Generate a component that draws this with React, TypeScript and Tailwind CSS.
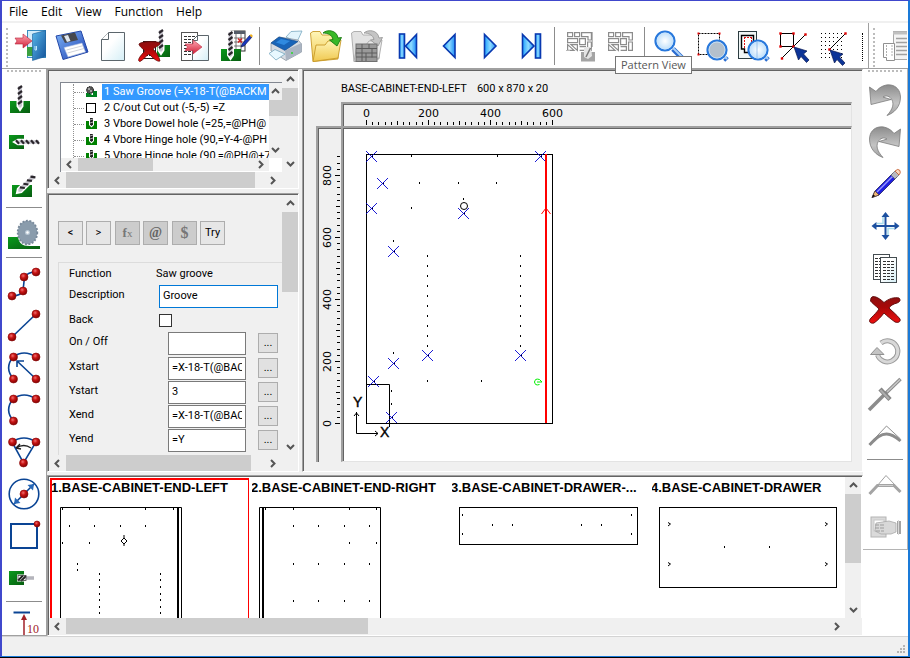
import React from "react";

type Kids = { children?: React.ReactNode };
type Pt = [number, number];

const SANS = "font-['Roboto',Arial,sans-serif]";
const ARIAL = "font-['Liberation_Sans',Arial,sans-serif]";
const UI = "font-['Open_Sans','Noto_Sans',sans-serif]";

/* ---------- shared drawing pieces ---------- */

function Defs() {
  return (
    <svg className="absolute size-0" aria-hidden="true">
      <defs>
        <linearGradient id="gBlue" x1="0" y1="0" x2="1" y2="1">
          <stop offset="0" stopColor="#7db4f8" />
          <stop offset="1" stopColor="#1c3fb0" />
        </linearGradient>
        <linearGradient id="gNav" x1="0" y1="0" x2="1" y2="0">
          <stop offset="0" stopColor="#1fa0ff" />
          <stop offset="0.5" stopColor="#8fdcff" />
          <stop offset="1" stopColor="#1c8cf8" />
        </linearGradient>
        <linearGradient id="gDoor" x1="0" y1="0" x2="1" y2="1">
          <stop offset="0" stopColor="#58b8ea" />
          <stop offset="1" stopColor="#14529a" />
        </linearGradient>
        <linearGradient id="gPage" x1="0" y1="0" x2="1" y2="1">
          <stop offset="0.4" stopColor="#ffffff" />
          <stop offset="1" stopColor="#d4eef6" />
        </linearGradient>
        <linearGradient id="gPink" x1="0" y1="0" x2="0" y2="1">
          <stop offset="0" stopColor="#ffa8b4" />
          <stop offset="1" stopColor="#d02038" />
        </linearGradient>
        <linearGradient id="gFolder" x1="0" y1="0" x2="0" y2="1">
          <stop offset="0" stopColor="#fff6b8" />
          <stop offset="1" stopColor="#f0c850" />
        </linearGradient>
        <linearGradient id="gGrey" x1="0" y1="0" x2="0" y2="1">
          <stop offset="0" stopColor="#8c8c8c" />
          <stop offset="0.6" stopColor="#c4c4c4" />
          <stop offset="1" stopColor="#a0a0a0" />
        </linearGradient>
        <linearGradient id="gRed" x1="0" y1="0" x2="0" y2="1">
          <stop offset="0" stopColor="#8c1010" />
          <stop offset="0.4" stopColor="#a80808" />
          <stop offset="1" stopColor="#f01010" />
        </linearGradient>
        <linearGradient id="gGreen" x1="0" y1="0" x2="1" y2="1">
          <stop offset="0" stopColor="#0a9a1c" />
          <stop offset="1" stopColor="#075c10" />
        </linearGradient>
        <radialGradient id="gLens">
          <stop offset="0" stopColor="#ffffff" />
          <stop offset="1" stopColor="#b8dcfa" />
        </radialGradient>
        <radialGradient id="gNode" cx="0.4" cy="0.35" r="0.7">
          <stop offset="0" stopColor="#f07070" />
          <stop offset="0.4" stopColor="#c81414" />
          <stop offset="1" stopColor="#780000" />
        </radialGradient>
      </defs>
    </svg>
  );
}

function Drill({ a, b, w = 4 }: { a: Pt; b: Pt; w?: number }) {
  const len = Math.hypot(b[0] - a[0], b[1] - a[1]);
  const angle = (Math.atan2(b[1] - a[1], b[0] - a[0]) * 180) / Math.PI;
  const h = w / 2;
  const turns = Array.from({ length: Math.floor((len - 2) / 5) + 1 }, (_, i) => i * 5);
  return (
    <g transform={`translate(${a[0]} ${a[1]}) rotate(${angle})`}>
      <path d={`M0 ${-h} H${len - 1} L${len + 2} 0 L${len - 1} ${h} H0 Z`} fill="#c9c7cf" stroke="#fff" strokeWidth="3" />
      <path d={`M0 ${-h} H${len - 1} L${len + 1} 0 L${len - 1} ${h} H0 Z`} fill="#c9c7cf" />
      {turns.map((t) => (
        <path key={t} d={`M${t} ${-h} L${t + 3} ${h}`} stroke="#2a262c" strokeWidth="2.200" />
      ))}
    </g>
  );
}

const Node = ({ x, y, r = 4 }: { x: number; y: number; r?: number }) => (
  <circle cx={x} cy={y} r={r} fill="url(#gNode)" stroke="#8a0808" strokeWidth="0.6" />
);

function Lens({ x, y, grey = false, end }: { x: number; y: number; grey?: boolean; end: number }) {
  return (
    <g>
      <line x1={x + 8} y1={y + 8} x2={x + end} y2={y + end} stroke="#2a6cd0" strokeWidth="5" />
      <line x1={x + 8} y1={y + 7} x2={x + end} y2={y + end - 1} stroke="#a8d0f8" strokeWidth="2" />
      <circle cx={x} cy={y} r="9.5" fill={grey ? "#b4c0cc" : "url(#gLens)"} stroke="#2878dc" strokeWidth="2.2" />
      <circle cx={x} cy={y} r="8" fill="none" stroke="#c8e4ff" strokeWidth="0.8" />
    </g>
  );
}

function Cursor({ x, y }: { x: number; y: number }) {
  return (
    <path
      transform={`translate(${x} ${y})`}
      d="M0 0 L13 4 L9.5 7 L15 13 L12.5 15.5 L7 9.5 L4.5 13 Z"
      fill="#0c3498"
      stroke="#081850"
      strokeWidth="0.7"
    />
  );
}

const FolderShape = ({ grey = false }: { grey?: boolean }) => (
  <g stroke={grey ? "#a8a8a8" : "#c89a28"} strokeWidth="0.9" strokeLinejoin="round">
    <path d="M5.5 6 L8 4.5 L15 4.5 L17 8 L31 8 L33 13 L33 32 L8 34.5 Z" fill={grey ? "#e2e2e2" : "url(#gFolder)"} />
    <path d="M8 34.5 L11 18 L20 18 L23 14 L36 13 L33 31 Z" fill={grey ? "#ececec" : "url(#gFolder)"} />
    <path
      d="M18 6 C22 2 32 3 33 11 L36.5 10.5 L32 19 L24.5 13 L28 12.5 C27 8 23 6 18 6 Z"
      fill={grey ? "#c4c4c4" : "#38b828"}
      stroke={grey ? "#989898" : "#187810"}
    />
  </g>
);

const PatternPieces = () => (
  <g fill="none" stroke="#8c8c8c" strokeWidth="1.2">
    <rect x="8.6" y="5.6" width="5" height="4" />
    <rect x="15.6" y="5.6" width="5" height="4" />
    <path d="M22.6 5.6 H32.4 V13 H29 V9.6 H22.6 Z" />
    <rect x="8.6" y="11.6" width="10" height="4" />
    <path d="M8.6 17.6 V23.4 H15 Z M12 17.6 L18.4 23.4 V17.6 Z" />
    <path d="M20.6 11.6 H26.4 V17.6 H20.6 Z M20.6 19.6 H26.4 V23.4 H20.6 M28.6 15 H32.4 V23.4 H28.6 Z" />
  </g>
);

const CrossShape = () => (
  <path
    d="M8 9 C10 6 15 8 21 13.500 C26 9.500 31 8 36 9 C38 11 37 13 34 14 C30 15 27 17 26 19 C30 23 34 26 37 30 C38 33 35 34 32 33 C28 30 24 27 21 24 C18 28 14 32 11 34 C7 35 5 32 8 29 C11 26 14 23 16 20 C13 17 9 14 7.500 12 Z"
    fill="url(#gRed)"
    stroke="#5a0808"
    strokeWidth="0.9"
  />
);

/* ---------- top toolbar ---------- */

const pageLines = (x: number, y: number, w: number, n: number, step: number) =>
  Array.from({ length: n }, (_, i) => (
    <line key={i} x1={x} x2={x + w} y1={y + i * step} y2={y + i * step} stroke="#333" strokeWidth="1" strokeDasharray="3 1" />
  ));

const exitIcon = (
  <>
    <rect x="17.500" y="3.500" width="18" height="27" fill="#d4eefa" stroke="#3a8cc0" />
    <rect x="17" y="20" width="7" height="9" fill="#3aa040" />
    <path d="M22.500 7 L35.500 3.500 V29.500 L22.500 33.500 Z" fill="url(#gDoor)" stroke="#1a5c98" strokeWidth="0.6" />
    <path d="M25 19 v4 h1.500 v-4" fill="none" stroke="#bfe8ff" />
    <path d="M5 11 H13 V7 L22 14 L13 21 V17 H5 L7 14 Z" fill="url(#gPink)" stroke="#b82038" strokeWidth="0.6" />
  </>
);
const saveIcon = (
  <>
    <path d="M5 9 L30 4 L37 25 L12 32.500 Z" fill="url(#gBlue)" stroke="#2448a8" />
    <path d="M10 8.500 L24 5.500 L27 13 L14 16 Z" fill="#46484e" />
    <path d="M13 9 L17 8 L19.500 14 L16 15 Z" fill="#dfe6ee" />
    <path d="M13 20.500 L31 16 L34.500 25 L17 30 Z" fill="#fff" stroke="#9fb4dc" strokeWidth="0.6" />
    <path d="M15.500 23 L32 18.700 M16.500 26 L33 21.500" stroke="#c4c8d0" strokeWidth="0.8" />
  </>
);
const newIcon = (
  <>
    <path d="M16.500 5.500 H32.500 V33.500 H9.500 V12.500 Z" fill="url(#gPage)" stroke="#5c666c" />
    <path d="M16.500 5.500 V12.500 H9.500" fill="#fff" stroke="#5c666c" />
  </>
);
const deleteIcon = (
  <>
    <rect x="24" y="18" width="13" height="12" fill="url(#gGreen)" />
    <Drill a={[28, 3]} b={[28, 24]} />
    <rect x="10.500" y="14.500" width="12" height="17" fill="#fff" stroke="#222" />
    <path d="M13 18 h7 M13 28 h7" stroke="#222" strokeWidth="2" strokeDasharray="2 1" />
    <path
      d="M6 17 C9 14 24 14 27 16 C28 18 22 20 20 22 C23 25 26 29 27 34 C24 35 20 31 16 27 C13 29 10 33 7 34.500 C4 34 6 30 12 24 C9 21 6 19 6 17 Z"
      fill="url(#gRed)"
      stroke="#600808"
      strokeWidth="0.8"
    />
  </>
);
const copyIcon = (
  <>
    <rect x="7.500" y="5.500" width="16" height="28" fill="#fff" stroke="#555" />
    {pageLines(10, 9.5, 11, 7, 3)}
    <path d="M23.500 8.500 H34.500 V33.500 H18.500 V13.500 Z" fill="url(#gPage)" stroke="#5c666c" />
    <path d="M23.500 8.500 V13.500 H18.500" fill="none" stroke="#5c666c" />
    <path d="M11 17 H19 V13 L28 20 L19 27 V23.500 H11 L13.500 20 Z" fill="url(#gPink)" stroke="#c02840" strokeWidth="0.6" />
  </>
);
const editIcon = (
  <>
    <rect x="16" y="4" width="14" height="20" fill="#fff" stroke="#333" />
    <path d="M16 11 h14 M16 15 h14 M16 19 h14 M21 5 v19 M26 5 v19" stroke="#555" strokeWidth="0.8" />
    <rect x="16" y="4" width="14" height="3" fill="#555c68" />
    <path d="M23 11.500 l4 4 m0 -4 l-4 4" stroke="#d02020" strokeWidth="1.500" />
    <rect x="6" y="22" width="20" height="12" fill="url(#gGreen)" />
    <Drill a={[15.5, 5]} b={[15.5, 29]} />
    <path d="M26 20 L27.500 16.500 L35 8 L37 10 L29.500 18.500 Z" fill="#1838c0" stroke="#101850" strokeWidth="0.7" />
    <path d="M34.500 8.500 L36 7 L38 9 L36.500 10.500 Z" fill="#f0b020" />
  </>
);
const printIcon = (
  <>
    <path d="M22 10 L27 4.500 L38 4 L33 15 Z" fill="#e2f4fc" stroke="#78a8c0" strokeWidth="0.8" />
    <path d="M7 16 L15 10 L34 13 L37.500 17 L37.500 25 L22 33.500 L7 24 Z" fill="#d6dbe2" stroke="#7c8894" strokeWidth="0.7" />
    <path d="M7 16 L15 10 L34 14.500 L21 23.500 Z" fill="#1864b8" stroke="#0c4488" strokeWidth="0.6" />
    <path d="M12 15.500 L17 12 L26 14 L20 18 Z" fill="#2f8ae0" />
    <path d="M21 23.500 L37.500 16 V25 L22 33.500 Z" fill="#aab4c2" />
    <circle cx="28" cy="26" r="1" fill="#28d828" />
    <path d="M5 26.500 L11 22.500 L21 27 L12 33 Z" fill="#e8f8ff" stroke="#78a8c0" strokeWidth="0.8" />
  </>
);
const greyFolderIcon = (
  <>
    <FolderShape grey />
    <rect x="10" y="17" width="21" height="17.500" fill="#9a9a9a" stroke="#707070" />
    <path d="M10 21.500 h21 M10 26 h21 M10 30 h21 M16 17 v17 M23 17 v4.500 M26 21.500 v9 M20 26 v8" stroke="#5c5c5c" />
  </>
);
const NAV = { fill: "url(#gNav)", stroke: "#0838b0", strokeWidth: 1.6 };
const firstIcon = (
  <>
    <rect x="12.500" y="7" width="5" height="24" {...NAV} />
    <path d="M29.500 7.500 V30.500 L18.500 19 Z" {...NAV} />
  </>
);
const prevIcon = <path d="M27 7.500 V30.500 L15.500 19 Z" {...NAV} />;
const nextIcon = <path d="M15.500 7.500 V30.500 L27 19 Z" {...NAV} />;
const lastIcon = (
  <>
    <path d="M12.500 7.500 V30.500 L24 19 Z" {...NAV} />
    <rect x="25.500" y="7" width="5" height="24" {...NAV} />
  </>
);
const patternEditIcon = (
  <>
    <PatternPieces />
    <path d="M33.500 5 V20 M7 23.500 H11" stroke="#b8b8b8" />
    <path d="M22 25 H26 V30 H32 V25 H36 V34.500 H22 Z" fill="#a4a4a4" />
    <path d="M25 20 H32 L33 29 L29 32 L25 30 Z" fill="#e4e4e4" />
    <path d="M27 30 L31.500 21" stroke="#7a7a7a" strokeWidth="1.500" />
  </>
);
const zoomAreaIcon = (
  <>
    <rect x="8.500" y="6.500" width="21" height="21" fill="none" stroke="#000" strokeDasharray="2 1" />
    {([[8.5, 6.5], [29.5, 6.5], [8.5, 27.5]] as Pt[]).map(([x, y]) => (
      <rect key={`${x}-${y}`} x={x - 1} y={y - 1} width="2" height="2" fill="#e00000" />
    ))}
    <Lens x={27} y={23} grey end={10} />
  </>
);
const zoomPartIcon = (
  <>
    <rect x="7.500" y="4.500" width="18" height="27" fill="#f0f6f6" stroke="#2c3c40" />
    <path d="M10.500 8.500 H22.500 V25.500 H13.500 V22 H10.500 Z" fill="#fff" stroke="#000" strokeWidth="1.400" />
    <path d="M13.500 10 V22 M20.500 10 V22 M13 10.500 H21" stroke="#e01010" strokeDasharray="2 1" />
    <Lens x={27} y={23} end={10} />
    <path d="M26 14 V32" stroke="#8ab8e8" strokeWidth="0.8" />
  </>
);
const red = (pts: Pt[]) =>
  pts.map(([x, y]) => <rect key={`${x}-${y}`} x={x - 1.2} y={y - 1.2} width="2.4" height="2.4" fill="#e00000" />);
const snapObjectIcon = (
  <>
    <rect x="8.500" y="6.500" width="13" height="13" fill="#fff" stroke="#000" />
    <path d="M9.500 31.500 L33.500 7.500" stroke="#000" />
    {red([[8.5, 6.5], [21.5, 6.5], [8.5, 19.5], [21.5, 19.5], [10, 31.5], [33.5, 7.5]])}
    <Cursor x={22} y={20} />
  </>
);
const snapGridIcon = (
  <>
    {Array.from({ length: 7 }, (_, r) =>
      Array.from({ length: 6 }, (_, c) => (
        <rect key={`${r}-${c}`} x={8 + c * 4} y={6 + r * 4} width="1" height="1" fill="#000" />
      )),
    )}
    <path d="M16.500 22.500 L32.500 6.500" stroke="#000" />
    {red([[16.5, 22.5], [32.5, 6.5]])}
    <Cursor x={17} y={23} />
  </>
);

const groups: { label: string; icon: React.ReactNode }[][] = [
  [
    { label: "Exit", icon: exitIcon },
    { label: "Save", icon: saveIcon },
    { label: "New", icon: newIcon },
    { label: "Delete drilling", icon: deleteIcon },
    { label: "Copy drilling", icon: copyIcon },
    { label: "Edit drilling", icon: editIcon },
  ],
  [
    { label: "Print", icon: printIcon },
    { label: "Open", icon: <FolderShape /> },
    { label: "Open pattern", icon: greyFolderIcon },
    { label: "First", icon: firstIcon },
    { label: "Previous", icon: prevIcon },
    { label: "Next", icon: nextIcon },
    { label: "Last", icon: lastIcon },
  ],
  [
    { label: "Edit pattern", icon: patternEditIcon },
    { label: "Pattern view", icon: <PatternPieces /> },
  ],
  [
    { label: "Zoom", icon: <Lens x={16} y={14} end={18} /> },
    { label: "Zoom area", icon: zoomAreaIcon },
    { label: "Zoom part", icon: zoomPartIcon },
    { label: "Snap to object", icon: snapObjectIcon },
    { label: "Snap to grid", icon: snapGridIcon },
  ],
];

function TopToolbar() {
  return (
    <div className="relative flex h-[46px] shrink-0 border-b border-[#a0a0a0] bg-white pt-1">
      <div className="my-px ml-1 mr-0.5 w-0.5 border-l-2 border-dotted border-[#bcbcbc]" />
      <div className="flex min-w-0 flex-1 overflow-hidden">
        {groups.map((g, i) => (
          <div key={i} className="flex shrink-0">
            {i > 0 && <div className="mx-[3px] h-[38px] w-0.5 border-l border-[#8c8c8c]" />}
            {g.map((b) => (
              <button key={b.label} type="button" aria-label={b.label} className="block h-10 w-[41px]">
                <svg width="41" height="40" viewBox="0 0 41 40">
                  {b.icon}
                </svg>
              </button>
            ))}
          </div>
        ))}
        <div className="ml-2 mt-1.5 h-7 w-px border-l border-dotted border-black" />
      </div>
      <div className="-mt-1 flex w-10 shrink-0 border-l border-[#a0a0a0] pt-1">
        <div className="my-px ml-1 w-0.5 border-l-2 border-dotted border-[#bcbcbc]" />
        <button type="button" aria-label="Part list" className="ml-2 block h-10 w-6 overflow-hidden">
          <svg width="24" height="40" viewBox="0 0 24 40">
            <rect x="10.500" y="4.500" width="18" height="28" fill="#f4f4f4" stroke="#a8a8a8" />
            <path d="M10 6 h14" stroke="#c0c0c0" strokeWidth="3" />
            <path d="M13 11.500 h12 M13 15.500 h12 M13 19.500 h12 M13 23.500 h12 M13 27.500 h12" stroke="#a0a0a0" strokeWidth="1.500" />
            <path d="M0.500 16.500 H11.500 V33.500 H3.500 V30.500 H0.500 Z" fill="#fff" stroke="#909090" />
            <path d="M3.500 18 V29 M9 18 V30" stroke="#b0b0b0" strokeDasharray="2 1" />
          </svg>
        </button>
      </div>
      <div
        role="tooltip"
        className={`absolute left-[613px] top-[33px] z-10 border border-[#767676] bg-white px-[5px] text-[11px] leading-4 text-[#575757] ${UI}`}
      >
        Pattern View
      </div>
    </div>
  );
}

/* ---------- side toolbars ---------- */

const LINE = { fill: "none", stroke: "#0a4494", strokeWidth: 1.6 };

const leftIcons: { label: string; icon?: React.ReactNode }[] = [
  {
    label: "Vertical bore",
    icon: (
      <>
        <rect x="8" y="22" width="20" height="12" fill="url(#gGreen)" />
        <Drill a={[18, 7]} b={[18, 28]} />
      </>
    ),
  },
  {
    label: "Horizontal bore",
    icon: (
      <>
        <rect x="7" y="14" width="15" height="14" fill="url(#gGreen)" />
        <Drill a={[37, 21]} b={[15, 21]} w={3.6} />
      </>
    ),
  },
  {
    label: "Angled bore",
    icon: (
      <>
        <rect x="10" y="22" width="20" height="12" fill="url(#gGreen)" />
        <Drill a={[32, 13]} b={[17, 28]} />
      </>
    ),
  },
  { label: "-" },
  {
    label: "Saw",
    icon: (
      <>
        <path d="M6 24 H16 C17 30 20 33 27 33 H38 V36 H6 Z" fill="url(#gGreen)" />
        <ellipse cx="25.500" cy="19.500" rx="9.800" ry="11.800" fill="#8a9cac" />
        <ellipse cx="25.500" cy="19.500" rx="9.800" ry="11.800" fill="none" stroke="#78899a" strokeWidth="1.800" strokeDasharray="2 1.500" />
        <circle cx="25.500" cy="19.500" r="2.500" fill="#b8c8d4" />
        <circle cx="25.500" cy="19.500" r="1.200" fill="#fff" />
      </>
    ),
  },
  { label: "-" },
  {
    label: "Polyline",
    icon: (
      <>
        <path d="M10 33 Q18 33 21 28 L22.500 14 Q26 9 34 9" {...LINE} />
        <Node x={10} y={33} />
        <Node x={21} y={28} />
        <Node x={22} y={14} />
        <Node x={34} y={9} />
      </>
    ),
  },
  {
    label: "Line",
    icon: (
      <>
        <path d="M10 32 L34 9" {...LINE} />
        <Node x={10} y={32} />
        <Node x={34} y={9} />
      </>
    ),
  },
  {
    label: "Arc by centre",
    icon: (
      <>
        <path d="M11 10 Q22 2 34 10 M11 10 Q2 21 11.500 32 M34 32 L15 14 M15 20 V14 H22" {...LINE} />
        <Node x={11.5} y={10} />
        <Node x={34} y={10} />
        <Node x={11.5} y={32} />
        <Node x={34} y={32} />
      </>
    ),
  },
  {
    label: "Arc",
    icon: (
      <>
        <path d="M11 10 Q22 2 34 10 M11 10 Q2 21 11.500 32" {...LINE} />
        <Node x={11.5} y={10} />
        <Node x={34} y={10} />
        <Node x={11.5} y={32} />
      </>
    ),
  },
  {
    label: "Sector",
    icon: (
      <>
        <path d="M10 11 Q22 3 34 11 L21.500 32 Z" {...LINE} />
        <path d="M14 17 Q22 12 29 17 M14 17 L18 13 M14 17 L19 18" fill="none" stroke="#222" strokeWidth="1.300" />
        <Node x={10.5} y={11} />
        <Node x={34} y={11} />
        <Node x={21.5} y={32} />
      </>
    ),
  },
  {
    label: "Circle",
    icon: (
      <>
        <circle cx="22" cy="21" r="14.800" {...LINE} />
        <path d="M12 31 L32 11" {...LINE} />
        <path d="M12 31 L13 24.500 L18.500 30 Z M32 11 L31 17.500 L25.500 12 Z" fill="#2868b8" />
        <Node x={22} y={21} />
      </>
    ),
  },
  {
    label: "Rectangle",
    icon: (
      <>
        <rect x="9" y="9" width="26" height="24" {...LINE} strokeWidth="2" />
        <Node x={35} y={9} r={3} />
      </>
    ),
  },
  {
    label: "Pocket",
    icon: (
      <>
        <rect x="7" y="14" width="15" height="14" fill="url(#gGreen)" />
        <rect x="15" y="17.500" width="10" height="7" fill="#fff" />
        <path d="M16 23.500 l5 -5 M19 24 l5 -5" stroke="#222" strokeWidth="1.800" />
        <rect x="16" y="18.500" width="8" height="5" fill="none" stroke="#444" strokeWidth="0.8" />
        <path d="M24 21 H32" stroke="#8c8c94" strokeWidth="3" />
        <path d="M25 21 H32" stroke="#dcdce4" />
      </>
    ),
  },
  { label: "-" },
  {
    label: "Depth",
    icon: (
      <>
        <path d="M11.500 5.500 H28" stroke="#0a4494" strokeWidth="2" />
        <path d="M22 42 V9" stroke="#a02028" strokeWidth="1.500" />
        <path d="M22 7 L25 13 H19 Z" fill="#a02028" />
        <text x="25" y="26" fontSize="12" fill="#a02028" className="font-['Liberation_Serif',serif]">
          10
        </text>
      </>
    ),
  },
];

const undoPath =
  "M6.500 8 L13 12.500 C21 2 37 4 37.500 18 C37.500 28 31 34 24 36.500 C30 30 31 25 29 21 C27 17 23 16 20 18 L28 20.500 L8 25.500 Z";

const rightIcons: { label: string; icon?: React.ReactNode }[] = [
  { label: "Undo", icon: <path d={undoPath} fill="url(#gGrey)" stroke="#7c7c7c" strokeWidth="0.8" /> },
  {
    label: "Redo",
    icon: <path d={undoPath} transform="matrix(-1 0 0 1 44 0)" fill="url(#gGrey)" stroke="#7c7c7c" strokeWidth="0.8" />,
  },
  {
    label: "Edit",
    icon: (
      <>
        <path d="M9 34.500 L12 28 L30 10 L34 14 L16 32 Z" fill="#2020e0" stroke="#202060" strokeWidth="0.8" />
        <path d="M14 29 L31 12" stroke="#9898ff" strokeWidth="1.500" />
        <path d="M9 34.500 L12 28 L16 32 Z" fill="#f0b878" stroke="#50382c" strokeWidth="0.7" />
        <path d="M28 12 L32 8 L36 12 L32 16 Z" fill="#b8b8c0" stroke="#606068" strokeWidth="0.7" />
        <path d="M32 8 Q35 5 37 7.500 Q38 10 36 12 Z" fill="#f8d8c0" stroke="#c05828" strokeWidth="0.8" />
        <path d="M9 34.500 l1.500 -3 l1.500 1.500 Z" fill="#000" />
      </>
    ),
  },
  {
    label: "Move",
    icon: (
      <>
        <path d="M22.500 9 V33 M10 21 H35" stroke="#1c50a0" strokeWidth="2" />
        <path d="M22.500 7 L26.500 12 H18.500 Z M22.500 35 L26.500 30 H18.500 Z M8.500 21 L13.500 17 V25 Z M36.500 21 L31.500 17 V25 Z" fill="#1c50a0" />
        <path d="M20 12 V18.500 H14 M25 30 V23.500 H31" fill="none" stroke="#a8dcec" strokeWidth="1.500" />
      </>
    ),
  },
  {
    label: "Copy",
    icon: (
      <>
        <rect x="10.500" y="7.500" width="16" height="25" fill="#fff" stroke="#444c50" />
        {pageLines(12, 11.5, 12, 7, 3)}
        <rect x="17.500" y="10.500" width="16" height="25" fill="url(#gPage)" stroke="#444c50" />
        {pageLines(20, 14.5, 12, 7, 3)}
      </>
    ),
  },
  { label: "Delete", icon: <CrossShape /> },
  {
    label: "Rotate",
    icon: (
      <>
        <path d="M18 12 A10.500 10.500 0 1 1 14.500 24" fill="none" stroke="#9a9a9a" strokeWidth="5" />
        <path d="M18 12 A10.500 10.500 0 1 1 14.500 24" fill="none" stroke="#d8d8d8" strokeWidth="3" />
        <path d="M7.500 23.500 L14 16.500 L21 23.500 Z" fill="#c4c4c4" stroke="#909090" />
      </>
    ),
  },
  {
    label: "Split",
    icon: (
      <>
        <path d="M6 37 L22 21" stroke="#8c8c8c" strokeWidth="3.500" />
        <path d="M22 21 L37.500 6" stroke="#8c8c8c" strokeWidth="3.500" />
        <path d="M24 19 L37 6.500" stroke="#c8c8c8" strokeWidth="1.500" />
        <path d="M17 16 L27 26.500" stroke="#858585" strokeWidth="4.500" />
        <path d="M17.500 17 L26 26" stroke="#adadad" strokeWidth="2" />
      </>
    ),
  },
  {
    label: "Fillet",
    icon: (
      <>
        <path d="M6.500 29 L23.500 11 L37.500 24" fill="none" stroke="#909090" />
        <path d="M6.500 30 C14 22 18 19 23.500 19 C29 19 33 22 37.500 26" fill="none" stroke="#8c8c8c" strokeWidth="3" />
      </>
    ),
  },
  { label: "-" },
  {
    label: "Chamfer",
    icon: (
      <>
        <path d="M14 21 L23 10.500 L32 20" fill="none" stroke="#a0a0a0" />
        <path d="M6.500 29 L14.500 20.500 H31 L37.500 27" fill="none" stroke="#a4a4a4" strokeWidth="3" />
        <path d="M16 20.500 H30" stroke="#d0d0d0" />
      </>
    ),
  },
  {
    label: "Manual",
    icon: (
      <>
        <rect x="8" y="10" width="15" height="20" fill="#dadada" stroke="#b4b4b4" />
        <rect x="11" y="13" width="10" height="11" fill="#fff" stroke="#c8c8c8" />
        <path d="M13 16 L26 14 L33 16 V25 L28 27 L18 27 L12 24 Z" fill="#d8d8d8" stroke="#a8a8a8" strokeWidth="0.8" />
        <path d="M12 18 H22 M12 21 H21 M13 24 H21" stroke="#9c9c9c" strokeDasharray="4 1" />
        <path d="M34 14 H38 V27 H34 Z" fill="#a4a4a4" />
        <path d="M35.500 13 V28" stroke="#d8d8d8" />
      </>
    ),
  },
];

function SideButtons({ items }: { items: { label: string; icon?: React.ReactNode }[] }) {
  return (
    <>
      <div className="mx-[5px] mt-px h-[9px] shrink-0 border-t-2 border-dotted border-[#bcbcbc]" />
      {items.map((b, i) =>
        b.icon ? (
          <button key={i} type="button" aria-label={b.label} className="block h-[42px] w-11 shrink-0">
            <svg width="44" height="42" viewBox="0 0 44 42">
              {b.icon}
            </svg>
          </button>
        ) : (
          <div key={i} className="h-2 shrink-0 px-1 pt-0.5">
            <div className="h-px bg-[#8c8c8c]" />
          </div>
        ),
      )}
    </>
  );
}

/* ---------- scroll bars and panels ---------- */

const chev = {
  up: "M1 6 L4.500 2.500 L8 6",
  down: "M1 3 L4.500 6.500 L8 3",
  left: "M6 1 L2.500 4.500 L6 8",
  right: "M3 1 L6.500 4.500 L3 8",
};

function Arrow({ dir, cls }: { dir: keyof typeof chev; cls: string }) {
  return (
    <button type="button" aria-label={`Scroll ${dir}`} className={`flex shrink-0 items-center justify-center ${cls}`}>
      <svg width="9" height="9" viewBox="0 0 9 9">
        <path d={chev[dir]} fill="none" stroke="#555" strokeWidth="2" />
      </svg>
    </button>
  );
}

const VBar = ({ size, thumb }: { size: string; thumb: string }) => (
  <div className={`flex shrink-0 flex-col bg-[#f0f0f0] ${size}`}>
    <Arrow dir="up" cls="h-[17px] w-full" />
    <div className="min-h-0 flex-1 overflow-hidden">
      <div className={`bg-[#cdcdcd] ${thumb}`} />
    </div>
    <Arrow dir="down" cls="h-[17px] w-full" />
  </div>
);

const HBar = ({ size, thumb }: { size: string; thumb: string }) => (
  <div className={`flex shrink-0 bg-[#f0f0f0] ${size}`}>
    <Arrow dir="left" cls="h-full w-[17px]" />
    <div className="h-full min-w-0 flex-1 overflow-hidden">
      <div className={`h-full bg-[#cdcdcd] ${thumb}`} />
    </div>
    <Arrow dir="right" cls="h-full w-[17px]" />
  </div>
);

function Sunken({ cls, inner, children }: Kids & { cls: string; inner: string }) {
  return (
    <div className={`border border-b-white border-l-[#a0a0a0] border-r-white border-t-[#a0a0a0] ${cls}`}>
      <div className={`h-full overflow-hidden border-l border-t border-[#646464] ${inner}`}>{children}</div>
    </div>
  );
}

/* ---------- function tree ---------- */

const TreeSaw = () => (
  <svg width="13" height="12" viewBox="0 0 13 12">
    <path d="M1 7 H5 L7 9 H12 V11 H1 Z M8 5 h4 v5 h-4 Z" fill="#008020" />
    <circle cx="5" cy="4" r="3.500" fill="#555" stroke="#111" strokeDasharray="1.500 1" />
    <path d="M3 3 h2 M5 5 h2" stroke="#eee" />
  </svg>
);
const TreeBox = () => (
  <svg width="13" height="12" viewBox="0 0 13 12">
    <rect x="1.500" y="1.500" width="9" height="9" fill="#fff" stroke="#000" />
  </svg>
);
const TreeBore = () => (
  <svg width="13" height="12" viewBox="0 0 13 12">
    <rect x="1" y="3" width="11" height="8" fill="#008000" />
    <path d="M4 0 H9 V7 L6.500 9.500 L4 7 Z" fill="#fff" />
    <path d="M5 0 H8 V6.500 L6.500 8 L5 6.500 Z" fill="#222" />
    <path d="M5 2 l3 -1 M5 5 l3 -1" stroke="#ccc" strokeWidth="0.8" />
  </svg>
);

const treeRows = [
  { text: "1 Saw Groove (=X-18-T(@BACKM", icon: <TreeSaw />, on: true },
  { text: "2 C/out Cut out (-5,-5) =Z", icon: <TreeBox />, on: false },
  { text: "3 Vbore Dowel hole (=25,=@PH@", icon: <TreeBore />, on: false },
  { text: "4 Vbore Hinge hole (90,=Y-4-@PH", icon: <TreeBore />, on: false },
  { text: "5 Vbore Hinge hole (90,=@PH@+7", icon: <TreeBore />, on: false },
];

function TreePanel() {
  return (
    <Sunken cls="h-[120px] shrink-0" inner="flex flex-col bg-[#f0f0f0]">
      <div className="flex min-h-0 flex-1">
        <div className="min-w-0 flex-1 pl-[11px] pt-[11px]">
          <div className="flex h-full flex-col overflow-hidden border-l border-t border-[#828790] bg-white">
            <div className="flex h-[75px] shrink-0">
              <ul className="ml-3 mt-px min-w-0 flex-1 overflow-hidden border-l border-dotted border-[#909090]">
                {treeRows.map((r) => (
                  <li key={r.text} className="flex h-4 items-center overflow-hidden whitespace-pre">
                    <span className="w-2.5 shrink-0 border-t border-dotted border-[#909090]" />
                    <span className="w-[18px] shrink-0 pl-px">{r.icon}</span>
                    <span className={r.on ? "flex-1 bg-[#3399ff] pl-0.5 leading-4 text-white" : "flex-1 pl-0.5 leading-4"}>
                      {r.text}
                    </span>
                  </li>
                ))}
              </ul>
              <VBar size="w-[13px]" thumb="h-4" />
            </div>
            <HBar size="h-[13px] w-[208px]" thumb="w-[75px]" />
          </div>
        </div>
        <VBar size="w-4" thumb="h-7" />
      </div>
      <HBar size="h-4 w-[232px]" thumb="w-[189px]" />
    </Sunken>
  );
}

/* ---------- function form ---------- */

const fields = [
  { label: "On / Off", value: "" },
  { label: "Xstart", value: "=X-18-T(@BAC" },
  { label: "Ystart", value: "3" },
  { label: "Xend", value: "=X-18-T(@BAC" },
  { label: "Yend", value: "=Y" },
];

const toolBtn = "h-6 w-[25px] border border-[#adadad]";

function FormPanel() {
  return (
    <Sunken cls="mt-[4px] min-h-0 flex-1" inner="flex flex-col bg-[#f0f0f0]">
      <div className="flex min-h-0 flex-1">
        <div className="min-w-0 flex-1 overflow-hidden pl-[9px] pt-[26px]">
          <div className="flex gap-[3px] whitespace-nowrap">
            <button type="button" className={`${toolBtn} bg-[#e6e6e6]`}>&lt;</button>
            <button type="button" className={`${toolBtn} mr-px bg-[#e6e6e6]`}>&gt;</button>
            <button type="button" className={`${toolBtn} bg-[#cccccc] font-['Liberation_Serif',serif] text-[13px] font-bold text-[#777]`}>
              f<span className="text-[11px] font-normal">x</span>
            </button>
            <button type="button" className={`${toolBtn} mr-px bg-[#cccccc] font-['Liberation_Serif',serif] text-sm font-bold text-[#666]`}>@</button>
            <button type="button" className={`${toolBtn} bg-[#cccccc] font-['Liberation_Serif',serif] text-base font-bold leading-5 text-[#777]`}>$</button>
            <button type="button" className={`${toolBtn} bg-[#e6e6e6]`}>Try</button>
          </div>
          <div className="mt-[17px] h-[220px] border-l border-t border-[#dcdcdc] pl-2.5">
            <div className="flex h-[22px] items-center">
              <span className="w-[87px]">Function</span>
              <span>Saw groove</span>
            </div>
            <div className="flex h-6 items-start">
              <label htmlFor="desc" className="w-[90px] leading-[20px]">Description</label>
              <input id="desc" defaultValue="Groove" className="h-[23px] w-[119px] border border-[#0078d7] bg-white px-[3px] pb-[3px]" />
            </div>
            <div className="flex h-[23px] items-center">
              <label htmlFor="back" className="w-[90px]">Back</label>
              <input id="back" type="checkbox" className="size-[13px] appearance-none border border-[#333] bg-white" />
            </div>
            {fields.map((f, i) => (
              <div key={f.label} className={i === 0 ? "flex h-[25px] items-start" : "flex h-6 items-start"}>
                <label htmlFor={f.label} className="w-[99px] leading-[20px]">{f.label}</label>
                <input id={f.label} defaultValue={f.value} className="h-[23px] w-[78px] border border-[#7a7a7a] bg-white px-[3px] pb-[3px]" />
                <button type="button" aria-label={`Choose ${f.label}`} className="ml-3 mt-px h-5 w-5 border border-[#adadad] bg-[#e1e1e1]">
                  ...
                </button>
              </div>
            ))}
          </div>
        </div>
        <VBar size="w-4" thumb="h-20" />
      </div>
      <HBar size="h-4 w-[232px]" thumb="w-[185px]" />
    </Sunken>
  );
}

/* ---------- part drawing ---------- */

const Dots = ({ pts }: { pts: Pt[] }) => (
  <>
    {pts.map(([x, y]) => (
      <rect key={`${x}-${y}`} x={x} y={y - 1} width="1" height="2" fill="#000" />
    ))}
  </>
);

const marks: Pt[] = [[28, 27], [197, 27], [39, 54], [28, 79], [120, 84], [50, 122], [84, 226], [177, 226], [50, 234], [30, 252], [48, 288]];
const shelf: number[] = Array.from({ length: 10 }, (_, i) => 127 + i * 10);
const holes: Pt[] = [
  [28, 27], [39, 54], [28, 79], [120, 84], [50, 122], [197, 27], [84, 226], [177, 226], [50, 234], [30, 252], [48, 288],
  [67, 27], [153, 27], [75, 54], [114, 54], [152, 54], [119, 70], [67, 79], [49, 112], [49, 224], [83, 252], [137, 252],
  [47, 262], [47, 275],
  ...shelf.map((y): Pt => [83, y]),
  ...shelf.map((y): Pt => [176, y]),
];

const tick = (k: number) => (k % 10 === 0 ? 5 : k % 5 === 0 ? 4 : 3);
const rulerFont = "font-['DejaVu_Sans',Verdana,sans-serif]";

function PartDrawing() {
  return (
    <svg width="300" height="330" viewBox="0 0 300 330" className="block">
      <g fill="none" stroke="#000">
        <rect x="22.500" y="25.500" width="186" height="269" />
        <path d="M22.500 255.500 H45.500 V298" />
        <circle cx="120" cy="77" r="3.500" />
        <path d="M12.500 283 V304.500 H34 M10 287 L12.500 284 L15 287 M31 302 L34 304.500 L31 307" />
      </g>
      <Dots pts={holes} />
      {marks.map(([x, y]) => (
        <path key={`${x}-${y}`} d={`M${x - 6} ${y - 5} l11 11 m0 -11 l-11 11`} stroke="#0000d0" strokeWidth="0.9" />
      ))}
      <path d="M202 25 V294" stroke="#ff0000" strokeWidth="2" />
      <path d="M197.500 85 L202 79 L206.500 85" fill="none" stroke="#ff0000" />
      <path d="M195.500 250.500 Q191 249 190.500 253 Q191 257 195.500 255.500 M193 253 H198 M195.500 250.500 L198 253" fill="none" stroke="#00f000" />
      <text x="9" y="278" fontSize="14" stroke="#000" strokeWidth="0.4" className={ARIAL}>Y</text>
      <text x="36" y="308" fontSize="14" stroke="#000" strokeWidth="0.4" className={ARIAL}>X</text>
    </svg>
  );
}

const bevel = "border-l-2 border-t-2 border-[#a0a0a0]";
const bevelIn = "border-l border-t border-[#646464]";

function DrawingPanel() {
  return (
    <Sunken cls="ml-[3px] min-w-0 flex-1" inner="bg-[#f0f0f0]">
      <div className="flex h-full flex-col pb-[9px] pl-[12px] pr-[10px]">
        <h1 className="ml-[25px] flex h-[31px] gap-2.5 whitespace-pre pt-[10px] leading-[15px]">
          <span>BASE-CABINET-END-LEFT</span>
          <span>600 x 870 x 20</span>
        </h1>
        <div className={`ml-[25px] h-6 shrink-0 border-r border-r-[#e3e3e3] ${bevel}`}>
          <div className={`h-full ${bevelIn}`}>
            <svg width="260" height="21" viewBox="0 0 260 21">
              {Array.from({ length: 31 }, (_, k) => (
                <path key={k} d={`M${Math.round(22 + k * 6.2) + 0.5} ${20 - tick(k)} V20`} stroke="#000" />
              ))}
              {[0, 200, 400, 600].map((v) => (
                <text key={v} x={22.5 + v * 0.31} y="12" fontSize="11" textAnchor="middle" className={rulerFont}>
                  {v}
                </text>
              ))}
            </svg>
          </div>
        </div>
        <div className="flex min-h-0 flex-1">
          <div className={`w-[25px] shrink-0 ${bevel}`}>
            <div className={`h-full overflow-hidden ${bevelIn}`}>
              <svg width="22" height="330" viewBox="0 0 22 330">
                {Array.from({ length: 44 }, (_, k) => (
                  <path key={k} d={`M${21 - tick(k)} ${Math.round(294 - k * 6.2) + 0.5} H21`} stroke="#000" />
                ))}
                {[0, 200, 400, 600, 800].map((v) => (
                  <text
                    key={v}
                    transform={`translate(12 ${294.5 - v * 0.31}) rotate(-90)`}
                    fontSize="11"
                    textAnchor="middle"
                    className={rulerFont}
                  >
                    {v}
                  </text>
                ))}
              </svg>
            </div>
          </div>
          <div className={`min-w-0 flex-1 border-b border-r border-b-[#e3e3e3] border-r-[#e3e3e3] ${bevel}`}>
            <div className={`h-full overflow-hidden bg-white ${bevelIn}`}>
              <PartDrawing />
            </div>
          </div>
        </div>
      </div>
    </Sunken>
  );
}

/* ---------- part thumbnails ---------- */

const rowOf = (y: number, xs: number[]): Pt[] => xs.map((x) => [x, y]);
const thumbShelf = [76, 82, 89, 96, 102, 109, 115];

const tiles = [
  {
    title: "1.BASE-CABINET-END-LEFT",
    art: (
      <>
        <path d="M10.500 130 V9.500 H131.500 V130" fill="none" stroke="#000" />
        <path d="M128 9 V130" stroke="#000" strokeWidth="2" />
        <path d="M74 40 L77 43 L74 46 L71 43 Z M74 37 V40 M74 46 V48" fill="none" stroke="#000" />
        <Dots
          pts={[
            ...rowOf(11, [12, 39, 95, 123]), ...rowOf(28, [19, 44, 70, 95]), ...rowOf(45, [12, 39]), [27, 66], [27, 72],
            ...thumbShelf.flatMap((y) => rowOf(y, [49, 110])),
          ]}
        />
      </>
    ),
  },
  {
    title: "2.BASE-CABINET-END-RIGHT",
    art: (
      <>
        <path d="M9.500 130 V9.500 H130.500 V130" fill="none" stroke="#000" />
        <path d="M13 9 V130" stroke="#000" strokeWidth="2" />
        <Dots
          pts={[
            ...rowOf(11, [15, 43, 99, 126]), ...rowOf(28, [43, 68, 94, 119]), ...rowOf(45, [99, 126]),
            ...rowOf(66, [43, 68, 94, 119]), ...rowOf(103, [43, 68, 94, 119]),
          ]}
        />
      </>
    ),
  },
  {
    title: "3.BASE-CABINET-DRAWER-...",
    art: (
      <>
        <rect x="9.500" y="9.500" width="178" height="37" fill="none" stroke="#000" />
        <Dots pts={[...rowOf(17, [12, 181]), ...rowOf(27, [42, 62, 131, 151]), ...rowOf(36, [12, 181])]} />
      </>
    ),
  },
  {
    title: "4.BASE-CABINET-DRAWER",
    art: (
      <>
        <rect x="9.500" y="9.500" width="177" height="80" fill="none" stroke="#000" />
        <path
          d="M18 24.500 L20.500 26 L18 28 M175 24.500 L177.500 26 L175 28 M18 64.500 L20.500 66 L18 68 M175 64.500 L177.500 66 L175 68"
          fill="none"
          stroke="#000"
        />
        <Dots pts={rowOf(49, [74, 119])} />
      </>
    ),
  },
];

function PartStrip() {
  return (
    <Sunken cls="mt-[3px] h-[161px] shrink-0" inner="flex flex-col bg-white">
      <div className="flex min-h-0 flex-1">
        <div className="flex min-w-0 flex-1 gap-px overflow-hidden pl-px pt-px">
          {tiles.map((t, i) => (
            <div
              key={t.title}
              className={
                i === 0
                  ? "relative w-[199px] shrink-0 overflow-hidden border-l-2 border-r border-t-2 border-[#ff0000]"
                  : "relative w-[199px] shrink-0 overflow-hidden border-l-2 border-r border-t-2 border-transparent"
              }
            >
              <div className={`-ml-px h-[18px] whitespace-nowrap text-[13px] font-bold leading-[15px] ${ARIAL}`}>{t.title}</div>
              <svg width="198" height="130" viewBox="0 0 198 130" className="-ml-0.5 block">
                {t.art}
              </svg>
            </div>
          ))}
        </div>
        <VBar size="mr-px w-4" thumb="h-[69px]" />
      </div>
      <div className="flex h-[17px] shrink-0 bg-[#f0f0f0]">
        <HBar size="h-4 flex-1" thumb="w-[302px]" />
        <div className="w-[17px]" />
      </div>
    </Sunken>
  );
}

/* ---------- window ---------- */

export default function App() {
  return (
    <div className="h-screen bg-black pb-px">
      <div
        className={`flex h-full flex-col overflow-hidden border-b border-l-2 border-r-2 border-t border-b-[#1a7ad8] border-l-[#4048cc] border-r-[#1a7ad8] border-t-[#4048cc] bg-[#f0f0f0] text-[11px] text-black ${SANS}`}
      >
        <Defs />
        <nav className={`flex h-[22px] shrink-0 gap-px border-b-2 border-[#f0f0f0] bg-white pl-px text-xs leading-[22px] ${UI}`}>
          {["File", "Edit", "View", "Function", "Help"].map((m) => (
            <button key={m} type="button" className="h-5 px-1.5">
              {m}
            </button>
          ))}
        </nav>
        <TopToolbar />
        <div className="flex min-h-0 flex-1">
          <aside className="flex w-[45px] shrink-0 flex-col overflow-hidden border-b border-r border-[#a0a0a0] bg-white">
            <SideButtons items={leftIcons} />
          </aside>
          <main className="flex min-w-0 flex-1 flex-col">
            <div className="flex min-h-0 flex-1">
              <div className="flex w-[252px] shrink-0 flex-col">
                <TreePanel />
                <FormPanel />
              </div>
              <DrawingPanel />
            </div>
            <PartStrip />
          </main>
          <aside className="w-[45px] shrink-0 bg-white">
            <div className="flex flex-col border-b border-r border-[#b4b4b4]">
              <SideButtons items={rightIcons} />
            </div>
          </aside>
        </div>
        <footer className="flex h-5 shrink-0 items-end justify-end border-t border-[#d4d4d4] p-0.5">
          <svg width="9" height="9" viewBox="0 0 9 9" fill="#b4b4b4">
            <path d="M6 0 h2 v2 h-2 Z M3 3 h2 v2 h-2 Z M6 3 h2 v2 h-2 Z M0 6 h2 v2 h-2 Z M3 6 h2 v2 h-2 Z M6 6 h2 v2 h-2 Z" />
          </svg>
        </footer>
      </div>
    </div>
  );
}
